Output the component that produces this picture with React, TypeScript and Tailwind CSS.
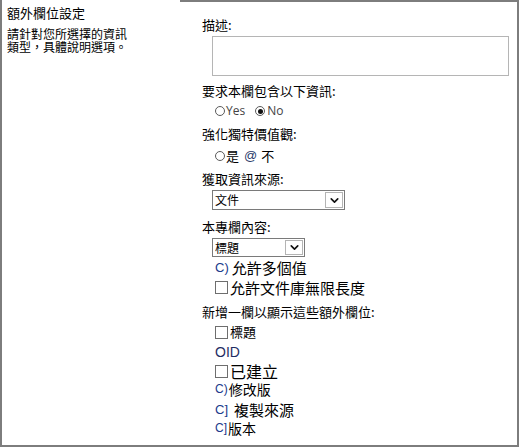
import { ChevronDown } from 'lucide-react';

const cjk = { fontFamily: '"Noto Sans CJK TC", "Noto Sans", sans-serif' };
const latin = { fontFamily: '"Liberation Sans", sans-serif' };

function Radio({ checked }: { checked?: boolean }) {
    return (
        <span className="w-[10px] h-[10px] rounded-full border border-[#5a5a5a] bg-white flex items-center justify-center shrink-0">
            {checked && <span className="w-[5px] h-[5px] rounded-full bg-[#111]" />}
        </span>
    );
}

function Check() {
    return <span className="w-[13px] h-[13px] border border-[#6e6e6e] bg-white shrink-0" />;
}

function Select({ value, width }: { value: string; width: string }) {
    return (
        <div className={`ml-[10px] flex items-stretch border border-[#7a7a7a] bg-white ${width}`}>
            <span className="flex-1 pl-[2px] text-[12px] leading-[16px] flex items-center text-black">{value}</span>
            <span className="w-[18px] m-[1px] border border-[#b4b4b4] bg-white flex items-center justify-center">
                <ChevronDown size={13} strokeWidth={3} className="text-[#111]" />
            </span>
        </div>
    );
}

export default function App() {
    return (
        <div className="w-[519px] h-[447px] flex border-l-2 border-r-2 border-b-2 border-[#7d7d7d] bg-white text-black" style={cjk}>
            {/* 左欄 */}
            <div className="w-[178px] shrink-0 pl-[5px] pt-[5px]">
                <div className="text-[13px] leading-[16px]">額外欄位設定</div>
                <div className="mt-[6px] text-[12px] leading-[13px]">
                    請針對您所選擇的資訊
                    <br />
                    類型，具體說明選項。
                </div>
            </div>

            {/* 右欄 */}
            <div className="flex-1 border-t-2 border-[#7d7d7d] pl-[22px] flex flex-col">
                <div className="mt-[15px] h-[16px] text-[13px] leading-[16px]">描述:</div>
                <div className="mt-[3px] ml-[10px] w-[297px] h-[40px] border border-[#b5b5b5] bg-white" />

                <div className="mt-[7px] h-[16px] text-[13px] leading-[16px]">要求本欄包含以下資訊:</div>
                <div className="mt-[4px] h-[16px] ml-[13px] flex items-center text-[12px] leading-[16px] text-[#444]" style={{ fontFamily: '"Open Sans", "Noto Sans", sans-serif' }}>
                    <Radio />
                    <span className="ml-[1px]">Yes</span>
                    <span className="ml-[10px]"><Radio checked /></span>
                    <span className="ml-[2px]">No</span>
                </div>

                <div className="mt-[7px] h-[16px] text-[13px] leading-[16px]">強化獨特價值觀:</div>
                <div className="mt-[6px] h-[16px] ml-[13px] flex items-center text-[13px] leading-[16px]">
                    <Radio />
                    <span className="ml-[1px]">是</span>
                    <span className="ml-[5px] text-[#2a3a6a]" style={latin}>@</span>
                    <span className="ml-[4px]">不</span>
                </div>

                <div className="mt-[7px] h-[16px] text-[13px] leading-[16px]">獲取資訊來源:</div>
                <div className="mt-[3px] h-[20px] flex">
                    <Select value="文件" width="w-[133px]" />
                </div>

                <div className="mt-[9px] h-[16px] text-[13px] leading-[16px]">本專欄內容:</div>
                <div className="mt-[3px] h-[19px] flex">
                    <Select value="標題" width="w-[93px]" />
                </div>

                <div className="mt-[1px] h-[20px] ml-[13px] flex items-center text-[15px] leading-[20px]">
                    <span className="text-[#203a8c] text-[13px]" style={latin}>C)</span>
                    <span className="ml-[3px]">允許多個值</span>
                </div>
                <div className="mt-[1px] h-[17px] ml-[13px] flex items-center text-[15px] leading-[17px]">
                    <Check />
                    <span className="ml-[2px]">允許文件庫無限長度</span>
                </div>

                <div className="mt-[8px] h-[16px] text-[13px] leading-[16px]">新增一欄以顯示這些額外欄位:</div>
                <div className="mt-[4px] h-[16px] ml-[13px] flex items-center text-[13px] leading-[16px]">
                    <Check />
                    <span className="ml-[2px]">標題</span>
                </div>
                <div className="mt-[4px] h-[17px] ml-[13px] text-[14px] leading-[17px] text-[#1f2d63]" style={latin}>
                    OID
                </div>
                <div className="h-[20px] ml-[13px] flex items-center text-[16px] leading-[20px]">
                    <Check />
                    <span className="ml-[2px]">已建立</span>
                </div>
                <div className="h-[17px] ml-[13px] flex items-center text-[14px] leading-[17px]">
                    <span className="text-[#203a8c] text-[12px]" style={latin}>C)</span>
                    <span className="ml-[1px]">修改版</span>
                </div>
                <div className="mt-[2px] h-[20px] ml-[13px] flex items-center text-[15px] leading-[20px]">
                    <span className="text-[#203a8c] text-[13px]" style={latin}>C]</span>
                    <span className="ml-[6px]">複製來源</span>
                </div>
                <div className="h-[16px] ml-[13px] flex items-center text-[14px] leading-[16px]">
                    <span className="text-[#203a8c] text-[12px]" style={latin}>C]</span>
                    <span className="ml-[1px]">版本</span>
                </div>
            </div>
        </div>
    );
}
